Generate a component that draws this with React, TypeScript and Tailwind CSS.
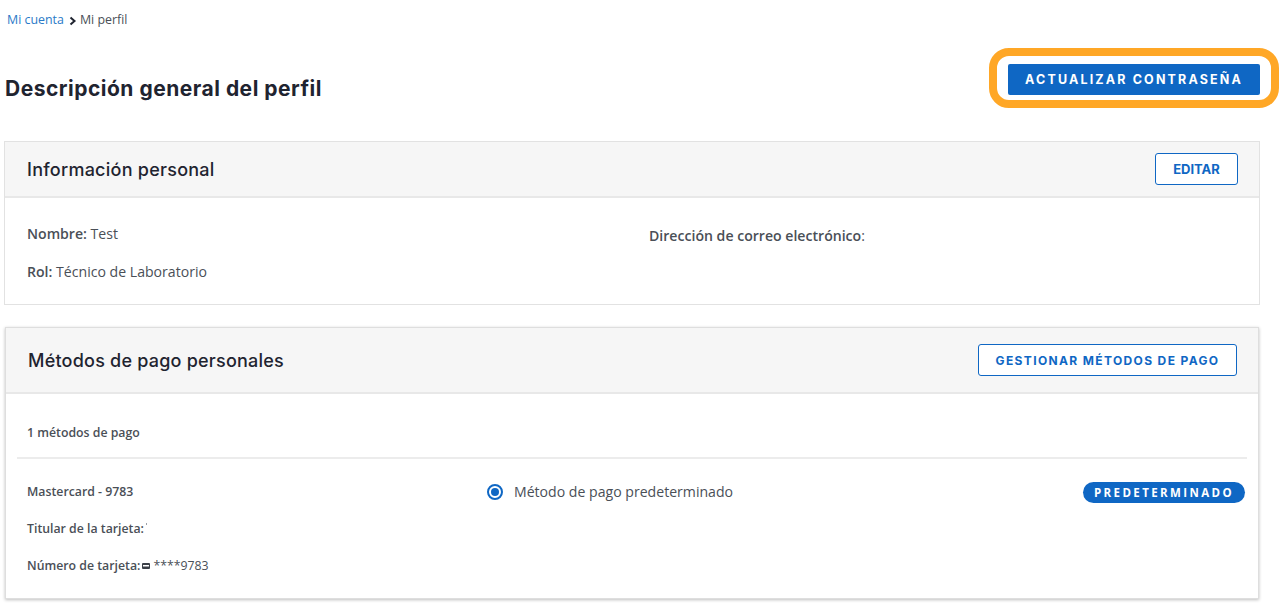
import React from 'react';

const heading = "font-['Inter',sans-serif]";

const OutlineButton = ({ label, className }: { label: string; className: string }) => (
  <button className={`h-8 rounded-[3px] border border-[#0f67c4] bg-white pt-[1px] font-bold text-[#0f67c4] ${heading} ${className}`}>
    {label}
  </button>
);

const App = () => {
  return (
    <div className="h-[608px] w-[1280px] overflow-hidden bg-white font-['Open_Sans',sans-serif] text-[#4a4f57]">
      <nav className="flex h-[40px] items-center pl-[7px] text-[12.4px]">
        <a className="text-[#2a7ac8]">Mi cuenta</a>
        <svg width="8" height="10" viewBox="0 0 8 10" className="ml-[5px] mr-[3px] mt-[1px]">
          <path d="M1.5 1.5 5.5 5l-4 3.5" fill="none" stroke="#1f2430" strokeWidth="2" />
        </svg>
        <span className="text-[#4a4f57]">Mi perfil</span>
      </nav>

      <div className="relative flex h-[101px] items-start justify-between pl-[5px] pr-[20px]">
        <h1 className={`mt-[34px] text-[21px] font-bold leading-[30px] tracking-[0.5px] text-[#1f2430] ${heading}`}>
          Descripción general del perfil
        </h1>
        <button className={`mt-[24px] h-[31px] w-[252px] rounded-[2px] bg-[#0f67c4] pt-[2px] text-[12.5px] font-bold tracking-[2.15px] text-white ${heading}`}>
          ACTUALIZAR CONTRASEÑA
        </button>
        <div className="absolute left-[989px] top-[8px] h-[60px] w-[290px] rounded-[20px] border-[8px] border-[#ffa726]" />
      </div>

      <section className="ml-[4px] w-[1256px] border border-[#e2e2e2]">
        <header className="flex h-[56px] items-center justify-between border-b-2 border-[#e8e8e8] bg-[#f6f6f6] pl-[22px] pr-[21px]">
          <h2 className={`text-[18px] font-medium tracking-[0.25px] text-[#1f2430] ${heading}`}>Información personal</h2>
          <OutlineButton label="EDITAR" className="w-[83px] text-[13px]" />
        </header>
        <div className="flex h-[106px] pl-[22px] text-[14.1px] leading-[20px]">
          <div className="w-[622px] pt-[26px]">
            <p><b className="font-semibold">Nombre:</b> Test</p>
            <p className="mt-[18px]"><b className="font-semibold">Rol:</b> Técnico de Laboratorio</p>
          </div>
          <div className="pt-[28px]">
            <p><b className="font-semibold">Dirección de correo electrónico</b>:</p>
          </div>
        </div>
      </section>

      <section className="ml-[5px] mt-[22px] h-[272px] w-[1254px] border border-[#dedede] shadow-[0_1px_3px_rgba(0,0,0,0.25)]">
        <header className="flex h-[66px] items-center justify-between border-b-2 border-[#e8e8e8] bg-[#f6f6f6] pl-[22px] pr-[21px]">
          <h2 className={`text-[18px] font-medium tracking-[0.22px] text-[#1f2430] ${heading}`}>Métodos de pago personales</h2>
          <OutlineButton label="GESTIONAR MÉTODOS DE PAGO" className="w-[259px] text-[12px] tracking-[1.36px]" />
        </header>
        <div className="pl-[11px] pr-[11px]">
          <p className="flex h-[65px] items-center border-b-2 border-[#ececec] pl-[10px] pt-[15px] text-[12.3px] font-semibold">
            1 métodos de pago
          </p>
          <div className="flex items-start pl-[10px] text-[12.3px]">
            <div className="w-[460px] pt-[23px] font-semibold">
              <p className="leading-[20px]">Mastercard - 9783</p>
              <p className="mt-[17px] flex leading-[20px]">
                Titular de la tarjeta:
                <span className="ml-[2px] mt-[4px] h-[2px] w-[1px] bg-[#9aa0a8]" />
              </p>
              <p className="mt-[17px] flex items-center leading-[20px]">
                Número de tarjeta:
                <svg width="8" height="6" viewBox="0 0 8 6" className="ml-[2px] mr-[3px]">
                  <rect width="8" height="6" rx="1" fill="#3a3f47" />
                  <rect x="1" y="2" width="6" height="1.5" fill="#fff" />
                </svg>
                <span className="font-normal">****9783</span>
              </p>
            </div>
            <div className="flex items-center pt-[23px]">
              <span className="flex h-4 w-4 items-center justify-center rounded-full border-2 border-[#0f67c4]">
                <span className="h-2 w-2 rounded-full bg-[#0f67c4]" />
              </span>
              <span className="ml-[11px] text-[14.1px] leading-[20px]">Método de pago predeterminado</span>
            </div>
            <span className="ml-auto mr-[2px] mt-[23px] flex h-[21px] w-[162px] items-center justify-center rounded-full bg-[#0f67c4] text-[11.5px] font-bold tracking-[2.4px] text-white">
              PREDETERMINADO
            </span>
          </div>
        </div>
      </section>
    </div>
  );
};

export default App;
